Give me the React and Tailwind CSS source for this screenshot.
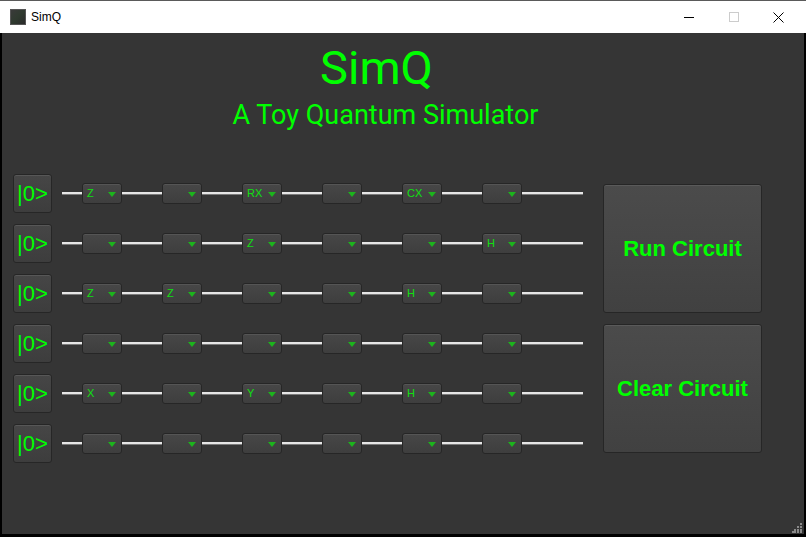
import React from 'react';

const GREEN = 'text-[#00ff00]';

// gate selections per qubit wire
const rows = [
  ['Z', '', 'RX', '', 'CX', ''],
  ['', '', 'Z', '', '', 'H'],
  ['Z', 'Z', '', '', 'H', ''],
  ['', '', '', '', '', ''],
  ['X', '', 'Y', '', 'H', ''],
  ['', '', '', '', '', ''],
];

function Wire({ w }) {
  return (
    <div className={`${w} flex flex-col`}>
      <div className="h-[2px] bg-[#e6e6e6]" />
      <div className="h-px bg-[#7a7a7a]" />
    </div>
  );
}

function GateSelect({ label }) {
  return (
    <div className="w-[40px] h-[21px] flex items-center justify-between pl-[4px] pr-[5px] rounded-[3px] border border-[#262626] bg-gradient-to-b from-[#474747] to-[#3e3e3e] shadow-[inset_0_1px_0_#555]">
      <span className="text-[11px] leading-none text-[#10e010]" style={{ fontFamily: '"Liberation Sans", sans-serif' }}>
        {label}
      </span>
      <svg width="8" height="5" viewBox="0 0 8 5" className="mt-px">
        <path d="M0 0h8L4 5z" fill="#1db41d" />
      </svg>
    </div>
  );
}

function QubitRow({ gates }) {
  return (
    <div className="flex items-center h-[39px]">
      <div
        className={`w-[39px] h-[39px] mr-[10px] flex items-center justify-center rounded-[3px] border border-[#262626] bg-gradient-to-b from-[#464646] to-[#3d3d3d] shadow-[inset_0_1px_0_#575757] text-[22px] leading-none ${GREEN}`}
        style={{ fontFamily: '"Liberation Sans", sans-serif' }}
      >
        |0&gt;
      </div>
      <Wire w="w-[20px]" />
      {gates.map((g, i) => (
        <React.Fragment key={i}>
          <GateSelect label={g} />
          <Wire w={i === gates.length - 1 ? 'w-[61px]' : 'w-[40px]'} />
        </React.Fragment>
      ))}
    </div>
  );
}

function BigButton({ children }) {
  return (
    <div
      className={`w-[159px] h-[129px] flex items-center justify-center rounded-[3px] border border-[#262626] bg-gradient-to-b from-[#4b4b4b] to-[#414141] shadow-[inset_0_1px_0_#5a5a5a] text-[22px] font-bold ${GREEN}`}
      style={{ fontFamily: '"Liberation Sans", sans-serif' }}
    >
      {children}
    </div>
  );
}

export default function App() {
  return (
    <div className="w-[806px] h-[537px] bg-black flex flex-col overflow-hidden" style={{ fontFamily: '"Liberation Sans", sans-serif' }}>
      {/* title bar */}
      <div className="h-[33px] bg-white border-t border-[#5a5a5a] flex items-center shrink-0">
        <div className="ml-[10px] w-[16px] h-[16px] bg-gradient-to-br from-[#3a3a3a] via-[#2f3a2f] to-[#2a2a2a] border border-[#555]" />
        <span className="ml-[5px] text-[12px] text-black">SimQ</span>
        <div className="ml-auto flex pr-[5px] h-full">
          <div className="w-[45px] h-full flex items-center justify-center">
            <div className="w-[10px] h-px bg-black" />
          </div>
          <div className="w-[45px] h-full flex items-center justify-center">
            <div className="w-[10px] h-[10px] border border-[#cccccc]" />
          </div>
          <div className="w-[45px] h-full flex items-center justify-center">
            <svg width="11" height="11" viewBox="0 0 11 11">
              <path d="M0.5 0.5l10 10M10.5 0.5l-10 10" stroke="#000" strokeWidth="1" />
            </svg>
          </div>
        </div>
      </div>

      {/* client area */}
      <div className="flex-1 mx-[2px] mb-[3px] bg-[#353535] relative flex flex-col">
        <div className="flex flex-col items-center w-[767px]" style={{ fontFamily: 'Roboto, sans-serif' }}>
          <div className={`mt-[11px] pr-[18px] text-[47px] leading-none ${GREEN}`}>SimQ</div>
          <div className={`mt-[11px] text-[27px] leading-none ${GREEN}`}>A Toy Quantum Simulator</div>
        </div>

        <div className="flex pl-[11px] mt-[45px]">
          <div className="flex flex-col gap-[11px]">
            {rows.map((r, i) => (
              <QubitRow key={i} gates={r} />
            ))}
          </div>
          <div className="ml-[20px] mt-[10px] flex flex-col gap-[11px]">
            <BigButton>Run Circuit</BigButton>
            <BigButton>Clear Circuit</BigButton>
          </div>
        </div>

        {/* size grip */}
        <svg width="10" height="10" viewBox="0 0 10 10" className="absolute right-[2px] bottom-[1px]">
          {[[8, 0], [8, 3], [5, 3], [8, 6], [5, 6], [2, 6], [8, 8], [5, 8], [2, 8], [0, 8]].map(([x, y], i) => (
            <rect key={i} x={x} y={y} width="2" height="2" fill="#8a8a8a" />
          ))}
        </svg>
      </div>
    </div>
  );
}
